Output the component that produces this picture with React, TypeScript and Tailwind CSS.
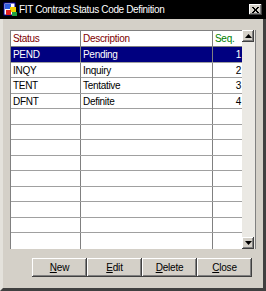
import React from 'react'

const rows = [
  { code: 'PEND', desc: 'Pending', seq: '1' },
  { code: 'INQY', desc: 'Inquiry', seq: '2' },
  { code: 'TENT', desc: 'Tentative', seq: '3' },
  { code: 'DFNT', desc: 'Definite', seq: '4' },
]

const raised =
  'bg-[#d4d0c8] shadow-[inset_-1px_-1px_0_#404040,inset_1px_1px_0_#ffffff,inset_-2px_-2px_0_#808080]'

const AppIcon = () => (
  <svg width="15" height="15" viewBox="0 0 15 15">
    <rect x="1" y="1" width="11" height="12" fill="#ffffff" stroke="#0000a0" />
    <rect x="2" y="2" width="6" height="5" fill="#3060e0" />
    <rect x="7" y="5" width="6" height="5" fill="#f0d000" />
    <rect x="3" y="8" width="5" height="5" fill="#e02020" />
    <rect x="9" y="10" width="5" height="4" fill="#20a040" />
  </svg>
)

const Btn = ({ label, u }: { label: string; u: number }) => (
  <button className={`${raised} w-[55px] h-[19px] text-[10px] tracking-[-0.2px] text-black flex items-center justify-center`}>
    <span>
      {label.slice(0, u)}
      <span className="underline">{label[u]}</span>
      {label.slice(u + 1)}
    </span>
  </button>
)

export default function App() {
  const blank = Array.from({ length: 13 - rows.length })
  return (
    <div className="w-[266px] h-[291px] bg-[#d4d0c8] font-['Liberation_Sans',Arial,sans-serif] border-l-[3px] border-t-0 border-r-[3px] border-b-[3px] border-l-[#e4e2dc] border-r-[#404040] border-b-[#404040] flex flex-col">
      {/* title bar */}
      <div className="h-[19px] -mx-[3px] bg-black flex items-center pl-[3px] pr-[4px]">
        <AppIcon />
        <span className="ml-[1px] text-white text-[10px] tracking-[-0.35px] leading-none">
          FIT Contract Status Code Definition
        </span>
        <div className={`${raised} ml-auto w-[13px] h-[11px] flex items-center justify-center`}>
          <svg width="7" height="6" viewBox="0 0 7 6">
            <path d="M0 0 L6 6 M1 0 L7 6 M6 0 L0 6 M7 0 L1 6" stroke="#000" strokeWidth="1" />
          </svg>
        </div>
      </div>

      {/* grid */}
      <div className="mt-[11px] ml-[7px] flex">
        <div className="w-[232px] bg-white border-t border-l border-[#808080]">
          <div className="grid grid-cols-[70px_132px_30px] h-[16px] text-[10px] tracking-[-0.3px] border-b border-[#808080]">
            <div className="pl-[2px] text-[#800000] border-r border-[#808080] flex items-center">Status</div>
            <div className="pl-[2px] text-[#800000] border-r border-[#808080] flex items-center">Description</div>
            <div className="pl-[2px] text-[#008000] flex items-center">Seq.</div>
          </div>
          {rows.map((r, i) => (
            <div
              key={r.code}
              className={`grid grid-cols-[70px_132px_30px] h-[15.5px] text-[10px] tracking-[-0.3px] border-b border-[#a0a0a0] ${
                i === 0 ? 'bg-[#000080] text-white' : 'text-black'
              }`}
            >
              <div className="pl-[2px] border-r border-[#808080] flex items-center">{r.code}</div>
              <div className="pl-[2px] border-r border-[#808080] flex items-center">{r.desc}</div>
              <div className="pr-[2px] flex items-center justify-end">{r.seq}</div>
            </div>
          ))}
          {blank.map((_, i) => (
            <div key={i} className="grid grid-cols-[70px_132px_30px] h-[15.5px] border-b border-[#a0a0a0] last:border-b-0">
              <div className="border-r border-[#808080]" />
              <div className="border-r border-[#808080]" />
              <div />
            </div>
          ))}
        </div>
        {/* scrollbar */}
        <div className="w-[14px] bg-[#ebe9e4] border-r border-[#808080] flex flex-col justify-between">
          <div className={`${raised} w-[12px] h-[12px] flex items-center justify-center`}>
            <svg width="7" height="4" viewBox="0 0 7 4"><path d="M3.5 0 L7 4 L0 4 Z" fill="#000" /></svg>
          </div>
          <div className={`${raised} w-[12px] h-[12px] flex items-center justify-center`}>
            <svg width="7" height="4" viewBox="0 0 7 4"><path d="M0 0 L7 0 L3.5 4 Z" fill="#000" /></svg>
          </div>
        </div>
      </div>

      {/* buttons */}
      <div className="mt-[9px] ml-[29px] flex">
        <Btn label="New" u={0} />
        <Btn label="Edit" u={0} />
        <Btn label="Delete" u={0} />
        <Btn label="Close" u={0} />
      </div>
    </div>
  )
}
